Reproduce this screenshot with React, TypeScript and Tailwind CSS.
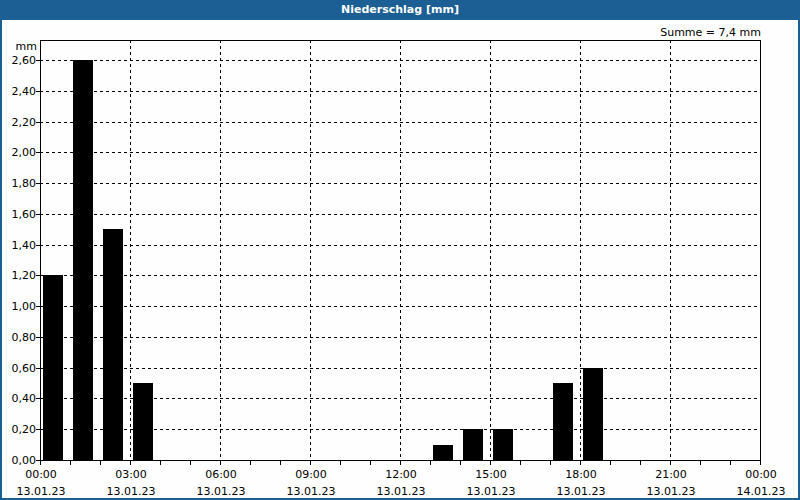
export default function App() {
  const ox = 2, oy = 20;
  const X = (x: number) => x - ox;
  const Y = (y: number) => y - oy;
  const vy = (v: number) => 460 - (v / 0.2) * (400 / 13);
  const bars: [number, number][] = [[0,1.2],[1,2.6],[2,1.5],[3,0.5],[13,0.1],[14,0.2],[15,0.2],[17,0.5],[18,0.6]];
  const yt = Array.from({ length: 14 }, (_, i) => i * 0.2);
  const xt = ["00:00","03:00","06:00","09:00","12:00","15:00","18:00","21:00","00:00"];
  return (
    <div className="w-[800px] h-[500px] flex flex-col bg-[#1c5f94]" style={{ fontFamily: '"DejaVu Sans", sans-serif' }}>
      <div className="h-5 flex items-center justify-center text-white font-bold text-[11px]">Niederschlag [mm]</div>
      <div className="mx-[2px] mb-[2px] flex-1 bg-[#fdfefd]">
        <svg width="796" height="478" fontSize="11" fontFamily="DejaVu Sans, sans-serif">
          <text x={X(761)} y={Y(36)} textAnchor="end">Summe = 7,4 mm</text>
          <text x={X(37)} y={Y(50)} textAnchor="end">mm</text>
          {yt.map((v, i) => (
            <g key={i}>
              {i > 0 && <line x1={X(40)} x2={X(760)} y1={Y(Math.round(vy(v))) + 0.5} y2={Y(Math.round(vy(v))) + 0.5} stroke="#000" strokeDasharray="3 3" />}
              <line x1={X(36)} x2={X(40)} y1={Y(Math.round(vy(v))) + 0.5} y2={Y(Math.round(vy(v))) + 0.5} stroke="#000" />
              <text x={X(36)} y={Y(Math.round(vy(v)) + 4)} textAnchor="end">{v.toFixed(2).replace(".", ",")}</text>
            </g>
          ))}
          {xt.map((_, i) => i > 0 && i < 8 && (
            <line key={i} x1={X(40 + i * 90) + 0.5} x2={X(40 + i * 90) + 0.5} y1={Y(40)} y2={Y(460)} stroke="#000" strokeDasharray="3 3" />
          ))}
          {bars.map(([h, v]) => (
            <rect key={h} x={X(43 + h * 30)} y={Y(Math.round(vy(v)))} width={20} height={460 - Math.round(vy(v))} fill="#000" />
          ))}
          <rect x={X(40) + 0.5} y={Y(40) + 0.5} width={720} height={420} fill="none" stroke="#000" />
          {Array.from({ length: 25 }, (_, i) => (
            <line key={i} x1={X(40 + i * 30) + 0.5} x2={X(40 + i * 30) + 0.5} y1={Y(460)} y2={Y(465)} stroke="#000" />
          ))}
          {xt.map((t, i) => (
            <g key={i}>
              <text x={X(41 + i * 90)} y={Y(478)} textAnchor="middle">{t}</text>
              <text x={X(41 + i * 90)} y={Y(495)} textAnchor="middle">{i === 8 ? "14.01.23" : "13.01.23"}</text>
            </g>
          ))}
        </svg>
      </div>
    </div>
  );
}
